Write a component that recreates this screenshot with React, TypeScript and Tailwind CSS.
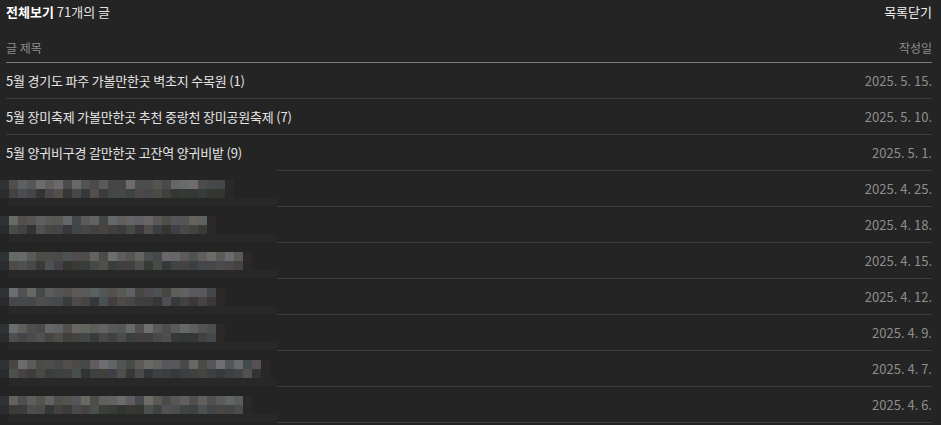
import React from 'react';

type Post = { title?: string; date: string; blur?: number; seed?: number };

const posts: Post[] = [
  { title: '5월 경기도 파주 가볼만한곳 벽초지 수목원 (1)', date: '2025. 5. 15.' },
  { title: '5월 장미축제 가볼만한곳 추천 중랑천 장미공원축제 (7)', date: '2025. 5. 10.' },
  { title: '5월 양귀비구경 갈만한곳 고잔역 양귀비밭 (9)', date: '2025. 5. 1.' },
  { date: '2025. 4. 25.', blur: 24, seed: 3 },
  { date: '2025. 4. 18.', blur: 22, seed: 11 },
  { date: '2025. 4. 15.', blur: 26, seed: 17 },
  { date: '2025. 4. 12.', blur: 23, seed: 29 },
  { date: '2025. 4. 9.', blur: 23, seed: 41 },
  { date: '2025. 4. 7.', blur: 28, seed: 53 },
  { date: '2025. 4. 6.', blur: 26, seed: 67 },
];

const rand = (seed: number) => {
  let s = seed * 9301 + 49297;
  return () => {
    s = (s * 9301 + 49297) % 233280;
    return s / 233280;
  };
};

// pixelated placeholder standing in for a blurred-out title
const Mosaic: React.FC<{ count: number; seed: number }> = ({ count, seed }) => {
  const r = rand(seed);
  const cell = (top: boolean, i: number) => {
    if (i === 0) return top ? '#2f3336' : '#2a2c2e';
    if (i === count + 1) return top ? '#2c2828' : '#2a2727';
    const base = top ? 70 + Math.floor(r() * 40) : 52 + Math.floor(r() * 30);
    const tr = Math.floor(r() * 10) - 5;
    const tb = Math.floor(r() * 10) - 5;
    return `rgb(${base + tr}, ${base}, ${base + tb})`;
  };
  const cols = Array.from({ length: count + 2 }, (_, i) => i);
  return (
    <div className="-ml-[6px] w-[277px] h-[35px] flex flex-col">
      <div className="h-[9px]" />
      <div className="flex">
        {cols.map((i) => (
          <div key={i} className="w-[9px] h-[9px]" style={{ background: cell(true, i) }} />
        ))}
      </div>
      <div className="flex">
        {cols.map((i) => (
          <div key={i} className="w-[9px] h-[9px]" style={{ background: cell(false, i) }} />
        ))}
      </div>
      <div className="ml-[9px] flex-1 bg-[#282828]" />
    </div>
  );
};

const App: React.FC = () => {
  return (
    <div
      className="w-[941px] h-[425px] bg-[#242424] pl-[6px] pr-[9px] overflow-hidden text-[13px]"
      style={{ fontFamily: '"Noto Sans CJK KR", "Noto Sans", sans-serif' }}
    >
      <div className="h-[24px] flex items-center justify-between">
        <div>
          <span className="font-bold text-white">전체보기</span>
          <span className="text-[#e2e2e2]"> 71개의 글</span>
        </div>
        <button className="text-[#f0f0f0]">목록닫기</button>
      </div>

      <div className="pt-[14px] pb-[4px] border-b border-[#7a7a7a] flex items-center justify-between h-[39px] text-[12px] text-[#8c8c8c]">
        <span>글 제목</span>
        <span>작성일</span>
      </div>

      {posts.map((p, i) => {
        const nextBlur = posts[i + 1]?.blur || p.blur;
        return (
          <div key={i} className="flex flex-col">
            <div className="h-[35px] flex items-center justify-between">
              {p.blur ? (
                <Mosaic count={p.blur} seed={p.seed || 1} />
              ) : (
                <span className="text-[#e4e4e4] tracking-[-0.2px]">{p.title}</span>
              )}
              <span className="text-[#8e8e8e]">{p.date}</span>
            </div>
            <div className={nextBlur ? 'h-px bg-[#3c3c3c] ml-[271px]' : 'h-px bg-[#3c3c3c]'} />
          </div>
        );
      })}
    </div>
  );
};

export default App;
